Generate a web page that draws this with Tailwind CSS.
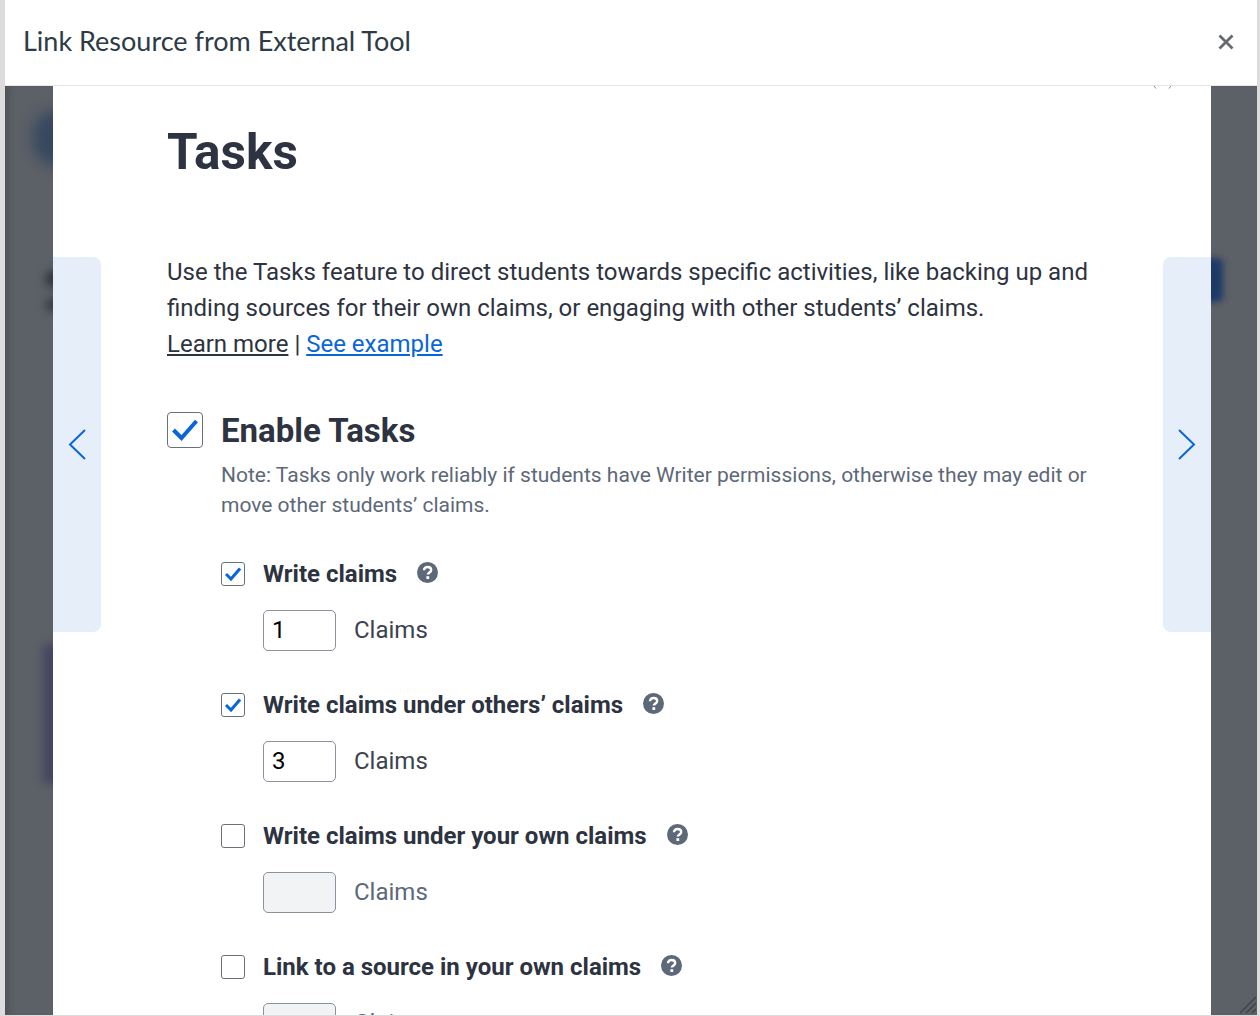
<!DOCTYPE html>
<html lang="en">
<head>
  <meta charset="utf-8" />
  <title>Link Resource from External Tool</title>
  <script src="https://cdn.jsdelivr.net/npm/@tailwindcss/browser@4"></script>
</head>
<body class="h-[1016px] overflow-hidden bg-[#dcdcdc] font-['Roboto',sans-serif]">
  <div class="ml-[5px] mr-[3px] h-[1015px] flex flex-col bg-white overflow-hidden">
    <!-- modal header -->
    <header class="h-[86px] shrink-0 flex items-center justify-between pl-[18px] pr-[23px] pb-[2px] bg-white border-b border-[#e6e6e6] relative z-10">
      <h2 class="font-['Lato',sans-serif] text-[27px] text-[#2d3b45]">Link Resource from External Tool</h2>
      <svg class="w-[16px] h-[16px]" viewBox="0 0 16 16"><path d="M1.500 1.500 14.500 14.500M14.500 1.500 1.500 14.500" stroke="#66696d" stroke-width="2.800" /></svg>
    </header>

    <div class="relative flex-1 bg-[#5c6067] overflow-hidden shadow-[inset_8px_0_8px_-6px_rgba(0,0,0,0.2)]">
      <!-- blurred page behind the dialog -->
      <div class="absolute left-[28px] top-[24px] w-[50px] h-[56px] rounded-full bg-[#36485f] blur-[7px]"></div>
      <div class="absolute left-[40px] top-[184px] w-[20px] h-[18px] rounded-full bg-[#33363c] blur-[4px]"></div>
      <div class="absolute left-[40px] top-[212px] w-[20px] h-[14px] rounded-full bg-[#3a3d44] blur-[4px]"></div>
      <div class="absolute left-[38px] top-[558px] w-[30px] h-[140px] rounded-[6px] bg-[#45455f] blur-[5px]"></div>
      <div class="absolute left-[1190px] top-[172px] w-[28px] h-[44px] rounded-[6px] bg-[#1d3a66] blur-[3px]"></div>

      <!-- tool panel -->
      <main class="relative w-[1158px] ml-[48px] h-full bg-white pl-[114px] pr-[120px] text-[#2d3340]">
        <h1 class="pt-[35px] text-[49.5px] leading-[62px] font-bold">Tasks</h1>

        <p class="mt-[71px] text-[24px] leading-[36px] text-[#2d3340]">
          Use the Tasks feature to direct students towards specific activities, like backing up and finding sources for their own claims, or engaging with other students’ claims.<br />
          <a class="underline">Learn more</a> | <a class="underline text-[#0a66d8]">See example</a>
        </p>

        <div class="mt-[50px] flex items-center gap-[18px] h-[36px]">
          <span class="w-[36px] h-[36px] rounded-[4px] border border-[#68707c] flex items-center justify-center">
            <svg class="w-[26px] h-[22px]" viewBox="0 0 26 22"><path d="M1.500 11 9.500 19 24.500 2" fill="none" stroke="#0a66d8" stroke-width="4" /></svg>
          </span>
          <span class="pt-[2px] text-[33px] font-bold">Enable Tasks</span>
        </div>

        <div class="ml-[54px]">
          <p class="mt-[12px] text-[21px] leading-[30px] text-[#5d6878]">Note: Tasks only work reliably if students have Writer permissions, otherwise they may edit or move other students’ claims.</p>

          <div class="mt-[42px] flex flex-col gap-[42px]">
            <section>
              <div class="flex items-center h-[24px]">
                <span class="w-[24px] h-[24px] rounded-[3px] border border-[#68707c] flex items-center justify-center">
                  <svg class="w-[16px] h-[14px]" viewBox="0 0 16 14"><path d="M1 7 6 12 15 1.500" fill="none" stroke="#0a66d8" stroke-width="3" /></svg>
                </span>
                <span class="ml-[18px] text-[24px] font-bold">Write claims</span>
                <svg class="ml-[20px] w-[21px] h-[21px] -mt-[3px]" viewBox="0 0 21 21"><circle cx="10.500" cy="10.500" r="10.500" fill="#5d6878" /><path d="M7 8.200C7 3.800 14.200 4 14.200 8c0 2.800-3.400 2.400-3.400 4.600" fill="none" stroke="#fff" stroke-width="2.400" /><rect x="9.400" y="14.200" width="2.800" height="2.800" fill="#fff" /></svg>
              </div>
              <div class="mt-[24px] ml-[42px] flex items-center gap-[18px]">
                <span class="w-[73px] h-[41px] rounded-[5px] border border-[#8b929c] pl-[8px] pb-[2px] flex items-center text-[24px] text-black">1</span>
                <span class="pb-[2px] text-[24px] text-[#3b4350]">Claims</span>
              </div>
            </section>
            <section>
              <div class="flex items-center h-[24px]">
                <span class="w-[24px] h-[24px] rounded-[3px] border border-[#68707c] flex items-center justify-center">
                  <svg class="w-[16px] h-[14px]" viewBox="0 0 16 14"><path d="M1 7 6 12 15 1.500" fill="none" stroke="#0a66d8" stroke-width="3" /></svg>
                </span>
                <span class="ml-[18px] text-[24px] font-bold">Write claims under others’ claims</span>
                <svg class="ml-[20px] w-[21px] h-[21px] -mt-[3px]" viewBox="0 0 21 21"><circle cx="10.500" cy="10.500" r="10.500" fill="#5d6878" /><path d="M7 8.200C7 3.800 14.200 4 14.200 8c0 2.800-3.400 2.400-3.400 4.600" fill="none" stroke="#fff" stroke-width="2.400" /><rect x="9.400" y="14.200" width="2.800" height="2.800" fill="#fff" /></svg>
              </div>
              <div class="mt-[24px] ml-[42px] flex items-center gap-[18px]">
                <span class="w-[73px] h-[41px] rounded-[5px] border border-[#8b929c] pl-[8px] pb-[2px] flex items-center text-[24px] text-black">3</span>
                <span class="pb-[2px] text-[24px] text-[#3b4350]">Claims</span>
              </div>
            </section>
            <section>
              <div class="flex items-center h-[24px]">
                <span class="w-[24px] h-[24px] rounded-[3px] border border-[#68707c]"></span>
                <span class="ml-[18px] text-[24px] font-bold">Write claims under your own claims</span>
                <svg class="ml-[20px] w-[21px] h-[21px] -mt-[3px]" viewBox="0 0 21 21"><circle cx="10.500" cy="10.500" r="10.500" fill="#5d6878" /><path d="M7 8.200C7 3.800 14.200 4 14.200 8c0 2.800-3.400 2.400-3.400 4.600" fill="none" stroke="#fff" stroke-width="2.400" /><rect x="9.400" y="14.200" width="2.800" height="2.800" fill="#fff" /></svg>
              </div>
              <div class="mt-[24px] ml-[42px] flex items-center gap-[18px]">
                <span class="w-[73px] h-[41px] rounded-[5px] border border-[#8b929c] bg-[#f2f3f5]"></span>
                <span class="pb-[2px] text-[24px] text-[#5d6878]">Claims</span>
              </div>
            </section>
            <section>
              <div class="flex items-center h-[24px]">
                <span class="w-[24px] h-[24px] rounded-[3px] border border-[#68707c]"></span>
                <span class="ml-[18px] text-[24px] font-bold">Link to a source in your own claims</span>
                <svg class="ml-[20px] w-[21px] h-[21px] -mt-[3px]" viewBox="0 0 21 21"><circle cx="10.500" cy="10.500" r="10.500" fill="#5d6878" /><path d="M7 8.200C7 3.800 14.200 4 14.200 8c0 2.800-3.400 2.400-3.400 4.600" fill="none" stroke="#fff" stroke-width="2.400" /><rect x="9.400" y="14.200" width="2.800" height="2.800" fill="#fff" /></svg>
              </div>
              <div class="mt-[24px] ml-[42px] flex items-center gap-[18px]">
                <span class="w-[73px] h-[41px] rounded-[5px] border border-[#8b929c] bg-[#f2f3f5]"></span>
                <span class="pb-[2px] text-[24px] text-[#5d6878]">Claims</span>
              </div>
            </section>
          </div>
        </div>

        <!-- carousel arrows -->
        <div class="absolute left-0 top-[171px] w-[48px] h-[375px] bg-[#e6eefa] rounded-r-[8px] flex items-center pl-[15px] pb-[2px]">
          <svg class="w-[18px] h-[32px]" viewBox="0 0 18 32"><path d="M17 2 2 16.500 17 31" fill="none" stroke="#0a66d8" stroke-width="2" /></svg>
        </div>
        <div class="absolute right-0 top-[171px] w-[48px] h-[375px] bg-[#e6eefa] rounded-l-[8px] flex items-center pl-[15px] pb-[2px]">
          <svg class="w-[18px] h-[32px]" viewBox="0 0 18 32"><path d="M1 2 16 16.500 1 31" fill="none" stroke="#0a66d8" stroke-width="2" /></svg>
        </div>
        <!-- clipped bit of the tool's own close icon -->
        <svg class="absolute left-[1100px] top-0 w-[20px] h-[3px]" viewBox="0 0 20 3"><path d="M1 0 3 2.500M18 0 16 2.500" stroke="#7d8aa0" stroke-width="1" /></svg>
      </main>

      <!-- resize grip -->
      <svg class="absolute right-[0px] bottom-[1px] w-[18px] h-[18px]" viewBox="0 0 18 18"><path d="M1 17 17 1M7 17 17 7M13 17 17 13" stroke="#3f4349" stroke-width="1.500" /></svg>
    </div>
  </div>
</body>
</html>
